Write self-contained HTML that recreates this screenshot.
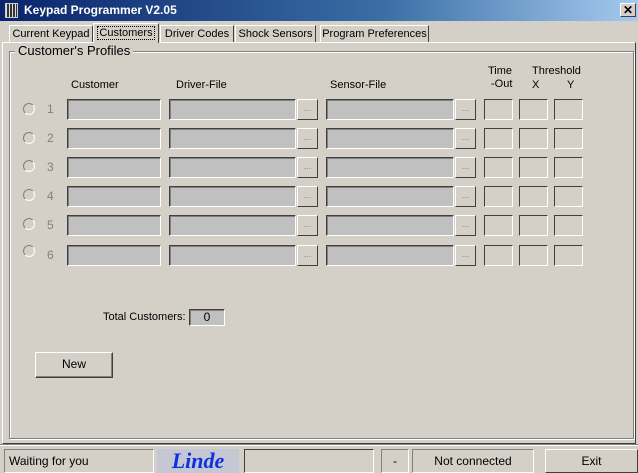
<!DOCTYPE html>
<html><head><meta charset="utf-8"><style>
*{margin:0;padding:0;box-sizing:border-box}
body{width:638px;height:473px;background:#d4d0c8;font-family:"Liberation Sans",sans-serif;font-size:11px;color:#000;position:relative;overflow:hidden}
.a{position:absolute}
.tb{left:0;top:0;width:638px;height:21px;background:linear-gradient(90deg,#0a246a 0%,#3a6ea5 60%,#a6caf0 100%);}
.tt{left:24px;top:3px;color:#fff;font-weight:bold;font-size:12px}
.x{left:620px;top:3px;width:16px;height:14px;background:#d4d0c8;border:1px solid;border-color:#fff #404040 #404040 #fff;font-weight:bold;font-size:12px;text-align:center;line-height:12px}
.tab{top:25px;height:18px;border:1px solid;border-color:#fff #404040 transparent #fff;border-bottom:none;padding-top:2px;white-space:nowrap;font-size:11px;text-align:center;overflow:hidden}
.panel{left:2px;top:42px;width:634px;height:402px;border:1px solid;border-color:#fff #404040 #404040 #fff}
.grp{left:9px;top:51px;width:625px;height:388px;border:1px solid #808080;box-shadow:inset 1px 1px 0 #fff,1px 1px 0 #fff}
.gl{left:15px;top:43px;background:#d4d0c8;padding:0 3px;font-size:13px}
.f{height:21px;background:#c0c0c0;border:1px solid;border-color:#404040 #fff #fff #404040;box-shadow:inset 1px 1px 0 #808080}
.e{height:21px;border:1px solid;border-color:#404040 #fff #fff #404040}
.b{height:21px;width:21px;border:1px solid;border-color:#fff #404040 #404040 #fff;color:#808080;font-size:9px;text-align:center;line-height:17px}
.r{width:12px;height:12px;border-radius:50%;border:1px solid;border-color:#808080 #fff #fff #808080;left:23px}
.n{left:47px;color:#808080;font-size:12px}
.h{font-size:11px}
.sp{top:449px;height:24px;border:1px solid;border-color:#808080 #fff #fff #808080;font-size:12px;line-height:22px}
</style></head><body>
<div class="a tb"></div>
<div class="a" style="left:5px;top:3px;width:13px;height:15px;border:1px solid #ccc;background:repeating-linear-gradient(90deg,#ddd 0 1px,#333 1px 3px)"></div>
<div class="a tt">Keypad Programmer V2.05</div>
<div class="a x">✕</div>
<div class="a tab" style="left:9px;width:84px">Current Keypad</div>
<div class="a tab" style="left:93px;width:66px;top:23px;height:20px;background:#d4d0c8;z-index:2;padding-top:3px"><span style="outline:1px dotted #000;padding:0 1px">Customers</span></div>
<div class="a tab" style="left:160px;width:74px">Driver Codes</div>
<div class="a tab" style="left:235px;width:81px">Shock Sensors</div>
<div class="a tab" style="left:320px;width:109px">Program Preferences</div>
<div class="a panel"></div>
<div class="a grp"></div>
<div class="a gl">Customer's Profiles</div>
<div class="a h" style="left:71px;top:79px">Customer</div>
<div class="a h" style="left:176px;top:79px">Driver-File</div>
<div class="a h" style="left:330px;top:79px">Sensor-File</div>
<div class="a h" style="left:488px;top:65px">Time</div>
<div class="a h" style="left:491px;top:78px">-Out</div>
<div class="a h" style="left:532px;top:65px">Threshold</div>
<div class="a h" style="left:532px;top:79px">X</div>
<div class="a h" style="left:567px;top:79px">Y</div>

<div class="a r" style="top:103px"></div><div class="a n" style="top:102px">1</div>
<div class="a f" style="left:67px;top:99px;width:94px"></div><div class="a f" style="left:169px;top:99px;width:127px"></div><div class="a b" style="left:297px;top:99px">...</div><div class="a f" style="left:326px;top:99px;width:128px"></div><div class="a b" style="left:455px;top:99px">...</div><div class="a e" style="left:484px;top:99px;width:29px"></div><div class="a e" style="left:519px;top:99px;width:29px"></div><div class="a e" style="left:554px;top:99px;width:29px"></div>
<div class="a r" style="top:132px"></div><div class="a n" style="top:131px">2</div>
<div class="a f" style="left:67px;top:128px;width:94px"></div><div class="a f" style="left:169px;top:128px;width:127px"></div><div class="a b" style="left:297px;top:128px">...</div><div class="a f" style="left:326px;top:128px;width:128px"></div><div class="a b" style="left:455px;top:128px">...</div><div class="a e" style="left:484px;top:128px;width:29px"></div><div class="a e" style="left:519px;top:128px;width:29px"></div><div class="a e" style="left:554px;top:128px;width:29px"></div>
<div class="a r" style="top:160px"></div><div class="a n" style="top:160px">3</div>
<div class="a f" style="left:67px;top:157px;width:94px"></div><div class="a f" style="left:169px;top:157px;width:127px"></div><div class="a b" style="left:297px;top:157px">...</div><div class="a f" style="left:326px;top:157px;width:128px"></div><div class="a b" style="left:455px;top:157px">...</div><div class="a e" style="left:484px;top:157px;width:29px"></div><div class="a e" style="left:519px;top:157px;width:29px"></div><div class="a e" style="left:554px;top:157px;width:29px"></div>
<div class="a r" style="top:189px"></div><div class="a n" style="top:189px">4</div>
<div class="a f" style="left:67px;top:186px;width:94px"></div><div class="a f" style="left:169px;top:186px;width:127px"></div><div class="a b" style="left:297px;top:186px">...</div><div class="a f" style="left:326px;top:186px;width:128px"></div><div class="a b" style="left:455px;top:186px">...</div><div class="a e" style="left:484px;top:186px;width:29px"></div><div class="a e" style="left:519px;top:186px;width:29px"></div><div class="a e" style="left:554px;top:186px;width:29px"></div>
<div class="a r" style="top:218px"></div><div class="a n" style="top:218px">5</div>
<div class="a f" style="left:67px;top:215px;width:94px"></div><div class="a f" style="left:169px;top:215px;width:127px"></div><div class="a b" style="left:297px;top:215px">...</div><div class="a f" style="left:326px;top:215px;width:128px"></div><div class="a b" style="left:455px;top:215px">...</div><div class="a e" style="left:484px;top:215px;width:29px"></div><div class="a e" style="left:519px;top:215px;width:29px"></div><div class="a e" style="left:554px;top:215px;width:29px"></div>
<div class="a r" style="top:245px"></div><div class="a n" style="top:248px">6</div>
<div class="a f" style="left:67px;top:245px;width:94px"></div><div class="a f" style="left:169px;top:245px;width:127px"></div><div class="a b" style="left:297px;top:245px">...</div><div class="a f" style="left:326px;top:245px;width:128px"></div><div class="a b" style="left:455px;top:245px">...</div><div class="a e" style="left:484px;top:245px;width:29px"></div><div class="a e" style="left:519px;top:245px;width:29px"></div><div class="a e" style="left:554px;top:245px;width:29px"></div>

<div class="a h" style="left:103px;top:311px">Total Customers:</div>
<div class="a f" style="left:189px;top:309px;width:36px;height:17px;text-align:center;font-size:12px;line-height:15px">0</div>
<div class="a" style="left:35px;top:352px;width:78px;height:26px;border:1px solid;border-color:#fff #404040 #404040 #fff;box-shadow:inset -1px -1px 0 #808080;text-align:center;line-height:23px;font-size:12px">New</div>

<div class="a" style="left:0;top:444px;width:638px;height:2px;border-top:1px solid #808080;border-bottom:1px solid #fff"></div>
<div class="a sp" style="left:4px;width:150px;padding-left:4px">Waiting for you</div>
<div class="a" style="left:157px;top:449px;width:82px;height:24px;background:#c4c8d4;color:#1030e0;font-family:'Liberation Serif',serif;font-style:italic;font-weight:bold;font-size:22px;line-height:24px;text-align:center">Linde</div>
<div class="a sp" style="left:244px;width:130px;border-color:#404040 #fff #fff #404040"></div>
<div class="a sp" style="left:381px;width:28px;text-align:center">-</div>
<div class="a sp" style="left:412px;width:122px;text-align:center">Not connected</div>
<div class="a" style="left:545px;top:449px;width:93px;height:24px;border:1px solid;border-color:#fff #404040 #404040 #fff;text-align:center;line-height:22px;font-size:12px">Exit</div>
</body></html>
